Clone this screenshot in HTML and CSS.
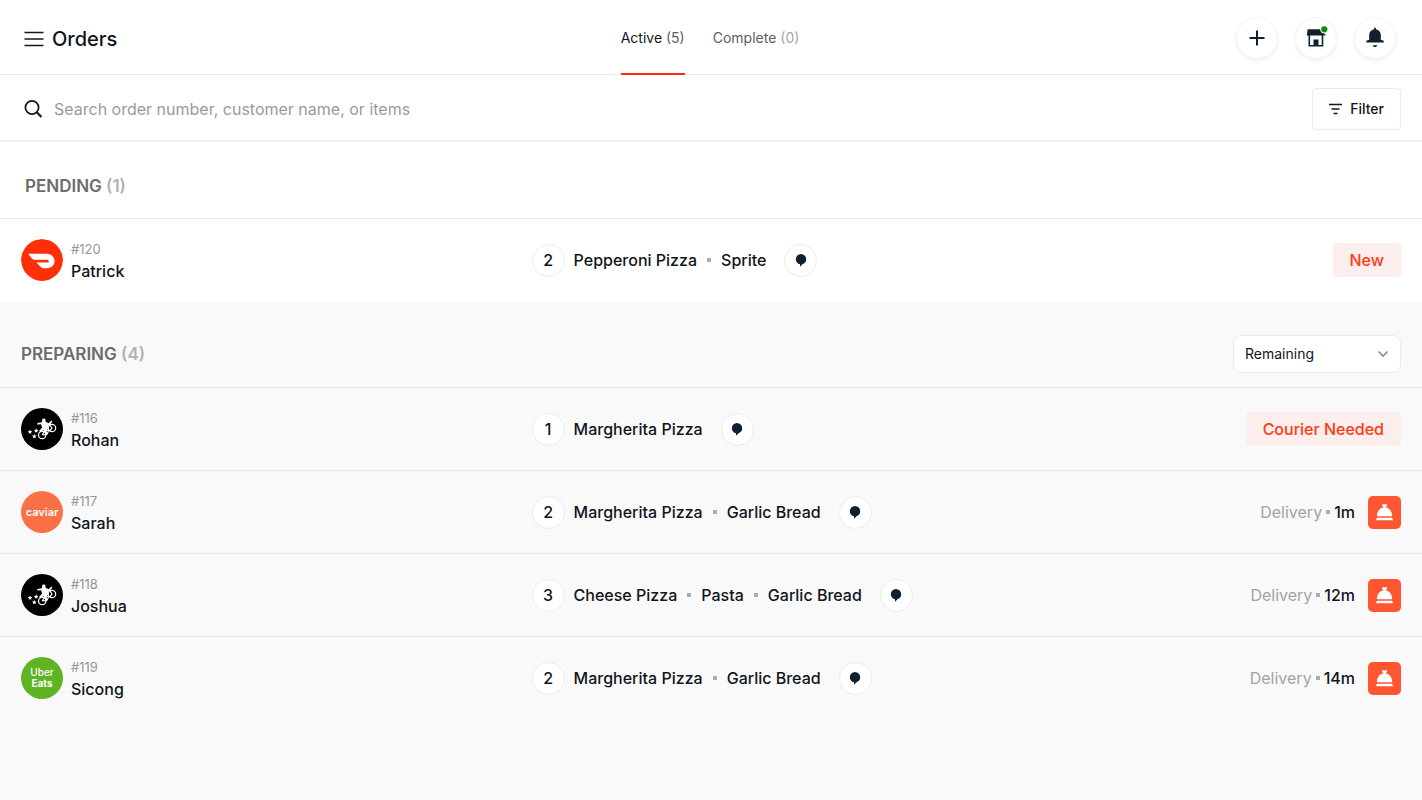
FILE: index.html
```html
<!DOCTYPE html>
<html lang="en">
<head>
  <meta charset="UTF-8" />
  <meta name="viewport" content="width=device-width, initial-scale=1.0" />
  <title>Orders</title>
  <link rel="stylesheet" href="styles.css">
</head>
<body>
  <!-- shared icons -->
  <svg class="sprite" aria-hidden="true">
    <symbol id="icon-note" viewBox="0 0 16 16">
      <path d="M8 2a5.200 5.200 0 0 0-5.200 5.200c0 2.600 1.800 4.600 4.200 5.100v2.500l2.800-2.700a5.200 5.200 0 0 0 3.400-4.900A5.200 5.200 0 0 0 8 2z" />
    </symbol>
    <symbol id="icon-bell-desk" viewBox="0 0 33 33">
      <path d="M14.200 8.200h4.800v2.300h-1.200v1c3.500.5 6.200 3.700 6.400 8v.7H8.900v-.7c.2-4.300 2.900-7.500 6.400-8v-1h-1.100zM9 21.700h15l1.200 2.500H7.800z" />
    </symbol>
    <symbol id="logo-rider" viewBox="0 0 42 42">
      <g fill="none" stroke="#fff" stroke-width="1.200">
        <circle cx="21.200" cy="27" r="3.700" />
        <circle cx="31" cy="20" r="3.700" />
        <path d="M21.200 27l2.800-4.800 5.200.4 1.800-2.600-3-4.200M21.200 27l4.600-.6 2.400-4.400" />
      </g>
      <path fill="#fff" d="M21.600 10.600l2.700.2.300 3 3 1.400 2.800-2.600 1 1-2.600 3.400-1.400.3.600 2.500-2.700 2.600 1.200 3.200-1.800 1-2.200-4.300-3.400 1.800-1-1.300 3-3-1-3.600-4.200.4.700-1.600 4.200-.8z" />
      <path fill="#fff" d="M9 21.600l.7 1.400 1.600.2-1.200 1.100.3 1.500-1.400-.7-1.400.7.3-1.500-1.200-1.100 1.600-.2zM15.200 20.400l.7 1.400 1.600.2-1.200 1.100.3 1.500-1.400-.7-1.400.7.3-1.500-1.200-1.100 1.600-.2zM13.300 26l.7 1.400 1.600.2-1.200 1.100.3 1.500-1.400-.7-1.400.7.3-1.500-1.200-1.100 1.600-.2z" />
    </symbol>
  </svg>

  <header class="topbar">
    <div class="topbar-left">
      <button class="menu-btn" aria-label="Menu">
        <svg width="20" height="16" viewBox="0 0 20 16"><path d="M0.500 1.500h19M0.500 8h19M0.500 14.500h19" stroke="#191919" stroke-width="1.500" /></svg>
      </button>
      <h1>Orders</h1>
    </div>
    <nav class="tabs">
      <a href="#active" class="tab active">Active <span>(5)</span></a>
      <a href="#complete" class="tab">Complete <span>(0)</span></a>
    </nav>
    <div class="actions">
      <button class="round-btn" aria-label="New order">
        <svg width="24" height="24" viewBox="0 0 24 24"><path d="M12 4.500v15M4.500 12h15" stroke="#10202e" stroke-width="2" /></svg>
      </button>
      <button class="round-btn" aria-label="Store status">
        <svg width="24" height="24" viewBox="0 0 24 24">
          <path fill="#10202e" d="M3.700 3.200H17l4.300 5.400v.8H2.800z" />
          <path fill="none" stroke="#10202e" stroke-width="1.600" d="M5.300 8.500v11.200h13.200V8.500" />
          <path fill="#10202e" d="M9.500 13.500h5v6.500h-5z" />
          <circle cx="20.300" cy="3.300" r="4.200" fill="#fff" />
          <circle cx="20.300" cy="3.300" r="3.100" fill="#0b8a0f" />
        </svg>
      </button>
      <button class="round-btn" aria-label="Notifications">
        <svg width="24" height="24" viewBox="0 0 24 24"><path fill="#10202e" d="M11.100 1.800h1.800v1.500c2.900.5 4.900 2.800 4.900 5.900v4.600l2.900.9v1.700H3.300v-1.700l2.900-.9V9.200c0-3.100 2-5.400 4.900-5.900zM9.600 19.300h4.800c-.4 1.200-1.200 1.800-2.400 1.800s-2-.6-2.400-1.800z" /></svg>
      </button>
    </div>
  </header>

  <div class="searchbar">
    <label for="search" aria-label="Search orders">
      <svg width="20" height="20" viewBox="0 0 20 20" fill="none" stroke="#191919" stroke-width="1.800"><circle cx="8" cy="8.500" r="6.600" /><path d="M12.800 13.200l4.600 4.700" stroke-width="2.200" /></svg>
    </label>
    <input type="text" id="search" placeholder="Search order number, customer name, or items" />
    <button class="filter-btn">
      <svg width="13" height="12" viewBox="0 0 13 12"><path d="M0 1.500h13M2.500 6h8M4.500 10.500h4" stroke="#191919" stroke-width="1.600" /></svg>
      Filter
    </button>
  </div>

  <main>
    <section class="pending">
      <div class="section-head">
        <h2>PENDING <span>(1)</span></h2>
      </div>
      <ul class="orders">
        <li class="order">
          <div class="customer">
            <svg class="avatar" viewBox="0 0 42 42"><circle cx="21" cy="21" r="21" fill="#ff3008" /><path fill="#fff" d="M7.200 14.800h18c4.900 0 8.400 3 8.400 7.200s-3.500 7.300-8 7.300h-3.500c-.8 0-1.300-.2-1.800-.7l-4.900-5h10.900c1 0 1.500-.6 1.500-1.400s-.5-1.500-1.500-1.500H13.400c-.9 0-1.500-.2-2.100-.8z" /></svg>
            <div>
              <div class="number">#120</div>
              <div class="name">Patrick</div>
            </div>
          </div>
          <div class="items">
            <span class="count">2</span>
            <span>Pepperoni Pizza</span><i class="dot"></i><span>Sprite</span>
            <button class="note" aria-label="Order note"><svg><use href="#icon-note" /></svg></button>
          </div>
          <div class="status"><span class="badge">New</span></div>
        </li>
      </ul>
    </section>

    <section class="preparing">
      <div class="section-head">
        <h2>PREPARING <span>(4)</span></h2>
        <div class="sort">
          <select aria-label="Sort orders">
            <option>Remaining</option>
          </select>
          <svg width="12" height="8" viewBox="0 0 12 8"><path d="M1.500 1.500L6 6l4.500-4.500" fill="none" stroke="#8c8c8c" stroke-width="1.600" /></svg>
        </div>
      </div>
      <ul class="orders">
        <li class="order">
          <div class="customer">
            <div class="avatar rider"><svg><use href="#logo-rider" /></svg></div>
            <div>
              <div class="number">#116</div>
              <div class="name">Rohan</div>
            </div>
          </div>
          <div class="items">
            <span class="count">1</span>
            <span>Margherita Pizza</span>
            <button class="note" aria-label="Order note"><svg><use href="#icon-note" /></svg></button>
          </div>
          <div class="status"><span class="badge">Courier Needed</span></div>
        </li>
        <li class="order">
          <div class="customer">
            <div class="avatar caviar">caviar</div>
            <div>
              <div class="number">#117</div>
              <div class="name">Sarah</div>
            </div>
          </div>
          <div class="items">
            <span class="count">2</span>
            <span>Margherita Pizza</span><i class="dot"></i><span>Garlic Bread</span>
            <button class="note" aria-label="Order note"><svg><use href="#icon-note" /></svg></button>
          </div>
          <div class="status">
            <span class="eta">Delivery<i class="dot"></i><b>1m</b></span>
            <button class="ready-btn" aria-label="Mark ready"><svg><use href="#icon-bell-desk" /></svg></button>
          </div>
        </li>
        <li class="order">
          <div class="customer">
            <div class="avatar rider"><svg><use href="#logo-rider" /></svg></div>
            <div>
              <div class="number">#118</div>
              <div class="name">Joshua</div>
            </div>
          </div>
          <div class="items">
            <span class="count">3</span>
            <span>Cheese Pizza</span><i class="dot"></i><span>Pasta</span><i class="dot"></i><span>Garlic Bread</span>
            <button class="note" aria-label="Order note"><svg><use href="#icon-note" /></svg></button>
          </div>
          <div class="status">
            <span class="eta">Delivery<i class="dot"></i><b>12m</b></span>
            <button class="ready-btn" aria-label="Mark ready"><svg><use href="#icon-bell-desk" /></svg></button>
          </div>
        </li>
        <li class="order">
          <div class="customer">
            <div class="avatar uber"><span>Uber</span><b>Eats</b></div>
            <div>
              <div class="number">#119</div>
              <div class="name">Sicong</div>
            </div>
          </div>
          <div class="items">
            <span class="count">2</span>
            <span>Margherita Pizza</span><i class="dot"></i><span>Garlic Bread</span>
            <button class="note" aria-label="Order note"><svg><use href="#icon-note" /></svg></button>
          </div>
          <div class="status">
            <span class="eta">Delivery<i class="dot"></i><b>14m</b></span>
            <button class="ready-btn" aria-label="Mark ready"><svg><use href="#icon-bell-desk" /></svg></button>
          </div>
        </li>
      </ul>
    </section>
  </main>
</body>
</html>
```

FILE: styles.css
```css
* {
  box-sizing: border-box;
  font-family: Inter, "Liberation Sans", sans-serif;
}
body {
  margin: 0;
  min-height: 100vh;
  display: flex;
  flex-direction: column;
  background: #fff;
  color: #10151c;
  font-size: 16px;
  line-height: 20px;
}
h1, h2, ul {
  margin: 0;
  padding: 0;
}
button {
  padding: 0;
  border: none;
  background: #fff;
  color: inherit;
  cursor: pointer;
}
svg {
  display: block;
}
.sprite {
  display: none;
}

/* top bar */
.topbar {
  display: grid;
  grid-template-columns: 1fr auto 1fr;
  height: 75px;
  padding: 0 26px 0 24px;
  border-bottom: 1px solid #ebebeb;
}
.topbar-left {
  display: flex;
  align-items: center;
  gap: 8px;
  padding-top: 2px;
}
h1 {
  font-size: 20px;
  font-weight: 500;
  line-height: 28px;
}
.tabs {
  display: flex;
  gap: 28px;
}
.tab {
  height: 75px;
  line-height: 75px;
  font-size: 14px;
  color: #606060;
  text-decoration: none;
}
.tab span {
  color: #a6a6a6;
}
.tab.active {
  color: #10151c;
  border-bottom: 2px solid #ff2a12;
}
.tab.active span {
  color: #606060;
}
.actions {
  display: flex;
  align-items: center;
  justify-content: flex-end;
  gap: 17px;
}
.round-btn {
  display: flex;
  align-items: center;
  justify-content: center;
  width: 42px;
  height: 42px;
  border: 1px solid #f4f4f4;
  border-radius: 50%;
  box-shadow: 0 2px 4px rgba(0, 0, 0, 0.06);
}
.round-btn svg {
  overflow: visible;
}

/* search */
.searchbar {
  display: flex;
  align-items: center;
  height: 67px;
  padding: 2px 21px 0 24px;
  border-bottom: 2px solid #f0f0f0;
}
.searchbar input {
  flex: 1;
  margin-left: 10px;
  padding: 0;
  border: none;
  outline: none;
  font-size: 16px;
  color: #10151c;
}
.searchbar input::placeholder {
  color: #9a9a9a;
}
.filter-btn {
  display: flex;
  align-items: center;
  gap: 8px;
  height: 42px;
  padding: 0 16px;
  border: 1px solid #ebebeb;
  border-radius: 4px;
  font-size: 14px;
  font-weight: 500;
}

/* sections */
main {
  flex: 1;
  display: flex;
  flex-direction: column;
}
.section-head {
  display: flex;
  align-items: center;
  justify-content: space-between;
}
.pending {
  padding-bottom: 1px;
}
.pending .section-head {
  height: 76px;
  padding: 12px 25px 0;
}
.preparing {
  flex: 1;
  background: #f9f9f9;
}
.preparing .section-head {
  height: 85px;
  padding: 18px 21px 0;
}
h2 {
  font-size: 17px;
  font-weight: 600;
  color: #6c6c6c;
}
h2 span {
  color: #b2b2b2;
}
.sort {
  display: grid;
  align-items: center;
  width: 168px;
}
.sort select,
.sort svg {
  grid-area: 1 / 1;
}
.sort select {
  appearance: none;
  height: 38px;
  padding: 0 11px;
  border: 1px solid #ebebeb;
  border-radius: 8px;
  background: #fff;
  color: #10151c;
  font-size: 14px;
}
.sort svg {
  justify-self: end;
  margin-right: 12px;
  pointer-events: none;
}

/* order rows */
.orders {
  list-style: none;
}
.order {
  display: grid;
  grid-template-columns: 37% 1fr auto;
  align-items: center;
  min-height: 83px;
  padding: 0 21px;
  border-top: 1px solid #e8e8e8;
}
.customer,
.items,
.status,
.eta {
  display: flex;
  align-items: center;
}
.customer {
  gap: 8px;
}
.avatar {
  flex: none;
  width: 42px;
  height: 42px;
  border-radius: 50%;
  color: #fff;
}
.number {
  font-size: 13px;
  color: #969696;
}
.name {
  margin-top: 2px;
  font-weight: 500;
}
.rider {
  background: #000;
}
.rider svg {
  width: 42px;
  height: 42px;
}
.caviar,
.uber {
  display: flex;
  flex-direction: column;
  align-items: center;
  justify-content: center;
}
.caviar {
  background: #fa7148;
  font-size: 11px;
  font-weight: 600;
}
.uber {
  background: #5fb424;
  font-size: 10px;
  font-weight: 500;
  line-height: 11px;
}
.uber b {
  font-weight: 700;
}
.items {
  font-weight: 500;
}
.count,
.note {
  display: flex;
  align-items: center;
  justify-content: center;
  width: 33px;
  height: 33px;
  border: 1px solid #ebebeb;
  border-radius: 50%;
  background: #fff;
}
.count {
  margin-right: 9px;
}
.note {
  margin-left: 18px;
}
.note svg {
  width: 16px;
  height: 16px;
  fill: #10202e;
}
.dot {
  width: 4px;
  height: 4px;
  margin: 0 10px;
  background: #adadad;
}
.status {
  justify-content: flex-end;
  gap: 13px;
}
.badge {
  padding: 7px 17px;
  border-radius: 4px;
  background: #fbeeed;
  color: #ff3a12;
  font-weight: 500;
}
.eta {
  color: #a3a3a3;
}
.eta .dot {
  margin: 0 4px;
}
.eta b {
  font-weight: 500;
  color: #10151c;
}
.ready-btn {
  width: 33px;
  height: 33px;
  border-radius: 5px;
  background: #ff5530;
}
.ready-btn svg {
  width: 33px;
  height: 33px;
  fill: #fff;
}
```
